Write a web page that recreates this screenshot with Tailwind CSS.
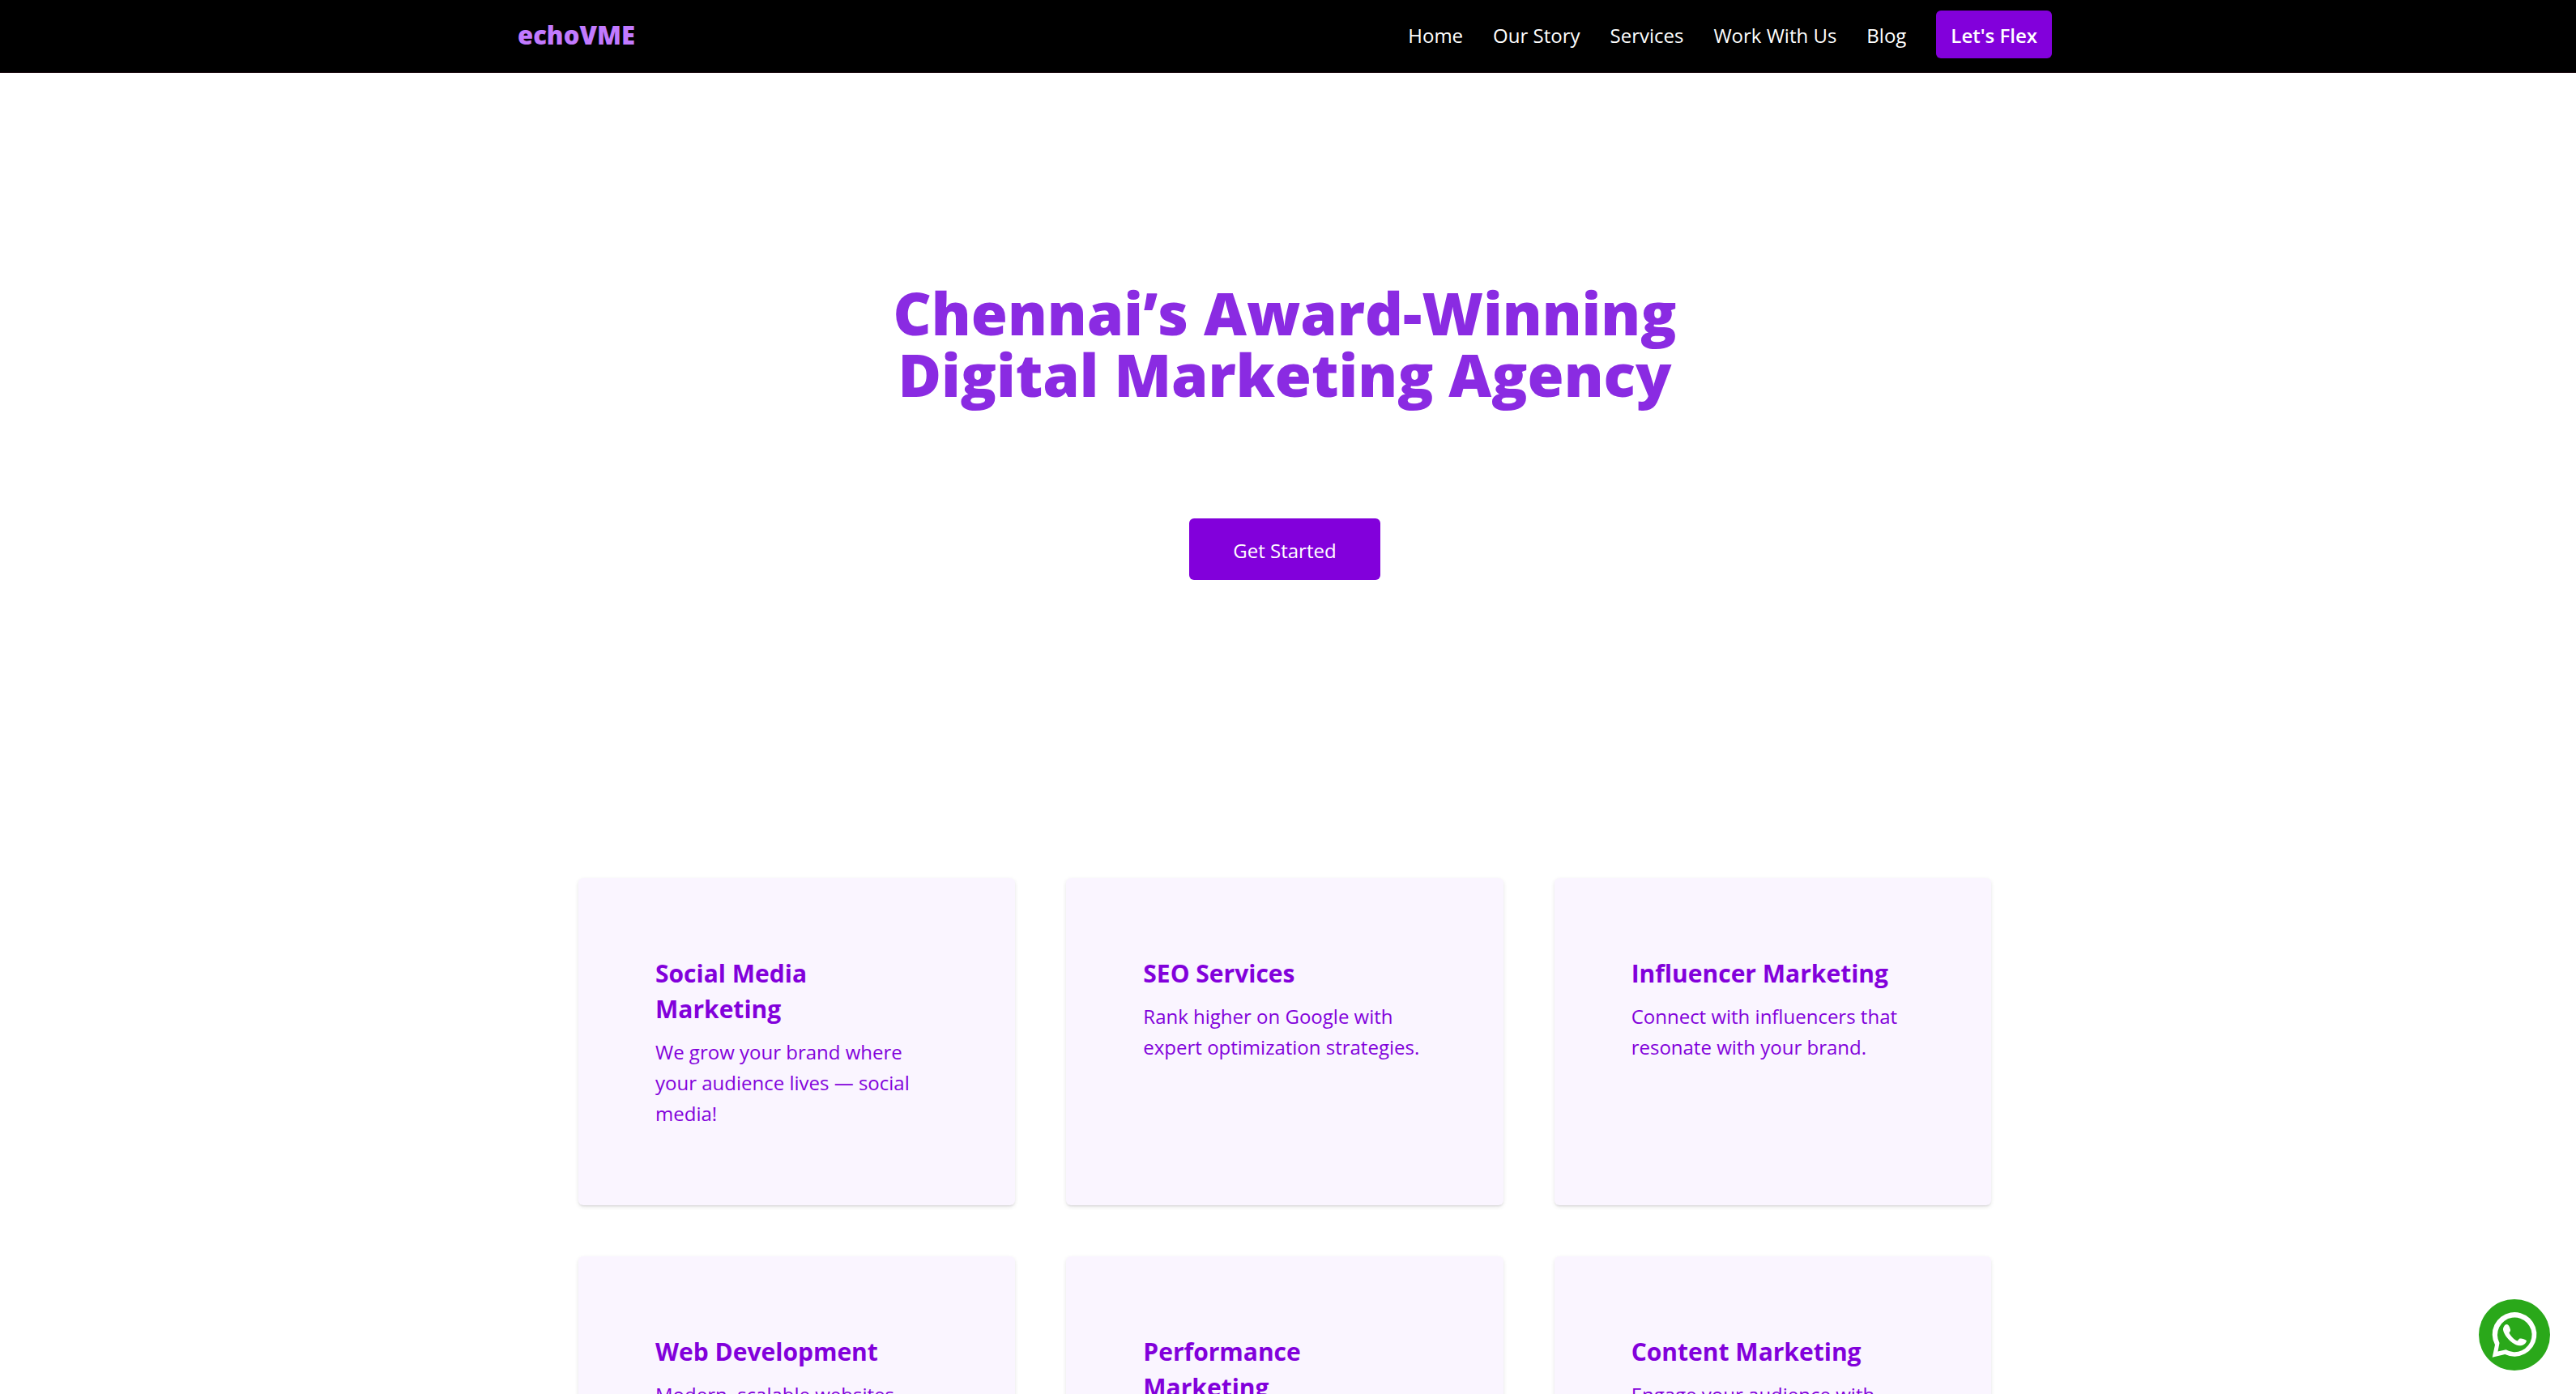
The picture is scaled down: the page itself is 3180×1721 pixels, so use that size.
<!DOCTYPE html>
<html lang="en">
<head>
<meta charset="utf-8">
<title>echoVME</title>
<script src="https://cdn.jsdelivr.net/npm/@tailwindcss/browser@4"></script>
</head>
<body class="bg-white font-['Open_Sans',sans-serif] text-2xl leading-[38px]">
<header class="border-b border-[#1a0a10] bg-black pr-2">
  <div class="mx-auto flex max-w-[1894px] items-center justify-between pt-[13px] pb-[17px]">
    <a href="#" class="text-[31px] leading-[44px] font-extrabold text-purple-400">echoVME</a>
    <nav class="flex items-baseline gap-[37px] text-white">
      <a href="#">Home</a>
      <a href="#">Our Story</a>
      <a href="#">Services</a>
      <a href="#">Work With Us</a>
      <a href="#">Blog</a>
      <a href="#" class="rounded-md bg-purple-700 px-[18px] pt-3 pb-[9px] font-semibold">Let's Flex</a>
    </nav>
  </div>
</header>
<main class="pr-2">
  <section class="flex flex-col items-center pt-[258px] text-center">
    <h1 class="text-[73px] leading-[76px] font-extrabold text-[#8a2be2]">Chennai’s Award-Winning<br>Digital Marketing Agency</h1>
    <button class="mt-[140px] rounded-md bg-purple-700 px-[54px] pt-[21px] pb-[17px] text-white">Get Started</button>
  </section>
  <section class="mx-auto mt-[368px] grid max-w-[1744px] grid-cols-3 gap-[63px] text-purple-700">
    <article class="rounded-md bg-purple-50 px-[95px] pt-[96px] pb-[94px] shadow-[0_2px_5px_rgb(0_0_0/0.1),0_2px_3px_-2px_rgb(0_0_0/0.2)]">
      <h2 class="mb-3 text-3xl leading-[44px] font-bold">Social Media Marketing</h2>
      <p>We grow your brand where your audience lives — social media!</p>
    </article>
    <article class="rounded-md bg-purple-50 px-[95px] pt-[96px] pb-[94px] shadow-[0_2px_5px_rgb(0_0_0/0.1),0_2px_3px_-2px_rgb(0_0_0/0.2)]">
      <h2 class="mb-3 text-3xl leading-[44px] font-bold">SEO Services</h2>
      <p>Rank higher on Google with expert optimization strategies.</p>
    </article>
    <article class="rounded-md bg-purple-50 px-[95px] pt-[96px] pb-[94px] shadow-[0_2px_5px_rgb(0_0_0/0.1),0_2px_3px_-2px_rgb(0_0_0/0.2)]">
      <h2 class="mb-3 text-3xl leading-[44px] font-bold">Influencer Marketing</h2>
      <p>Connect with influencers that resonate with your brand.</p>
    </article>
    <article class="rounded-md bg-purple-50 px-[95px] pt-[96px] pb-[94px] shadow-[0_2px_5px_rgb(0_0_0/0.1),0_2px_3px_-2px_rgb(0_0_0/0.2)]">
      <h2 class="mb-3 text-3xl leading-[44px] font-bold">Web Development</h2>
      <p>Modern, scalable websites tailored to your goals.</p>
    </article>
    <article class="rounded-md bg-purple-50 px-[95px] pt-[96px] pb-[94px] shadow-[0_2px_5px_rgb(0_0_0/0.1),0_2px_3px_-2px_rgb(0_0_0/0.2)]">
      <h2 class="mb-3 text-3xl leading-[44px] font-bold">Performance Marketing</h2>
      <p>Data-driven campaigns that deliver results.</p>
    </article>
    <article class="rounded-md bg-purple-50 px-[95px] pt-[96px] pb-[94px] shadow-[0_2px_5px_rgb(0_0_0/0.1),0_2px_3px_-2px_rgb(0_0_0/0.2)]">
      <h2 class="mb-3 text-3xl leading-[44px] font-bold">Content Marketing</h2>
      <p>Engage your audience with stories that matter.</p>
    </article>
  </section>
</main>
<a href="#" aria-label="Chat on WhatsApp" class="fixed right-8 bottom-[29px] size-[88px]">
  <svg viewBox="0 0 88 88" class="size-full">
    <circle cx="44" cy="44" r="44" fill="#2aa81a"/>
    <path fill="#fff" fill-rule="evenodd" d="M16.700 71.700L20 56.300A27.300 27.300 0 1 1 32.300 68ZM23.500 64.500L25.500 54A21.300 21.300 0 1 1 33.500 62.300Z"/>
    <path fill="#fff" d="M34.500 31C32 31 30 34.500 30 37.500C31 45 41 56 50 57.300C54 57.500 58 55.500 59 51.500C59 50 53 48.300 50.500 48.600C49 49.500 49 51 47.500 51.500C43.500 50 38.500 44.500 37.500 41.500C38 40 39.500 39.500 39 37.500C38.500 35.500 37 31 34.500 31Z"/>
  </svg>
</a>
</body>
</html>
